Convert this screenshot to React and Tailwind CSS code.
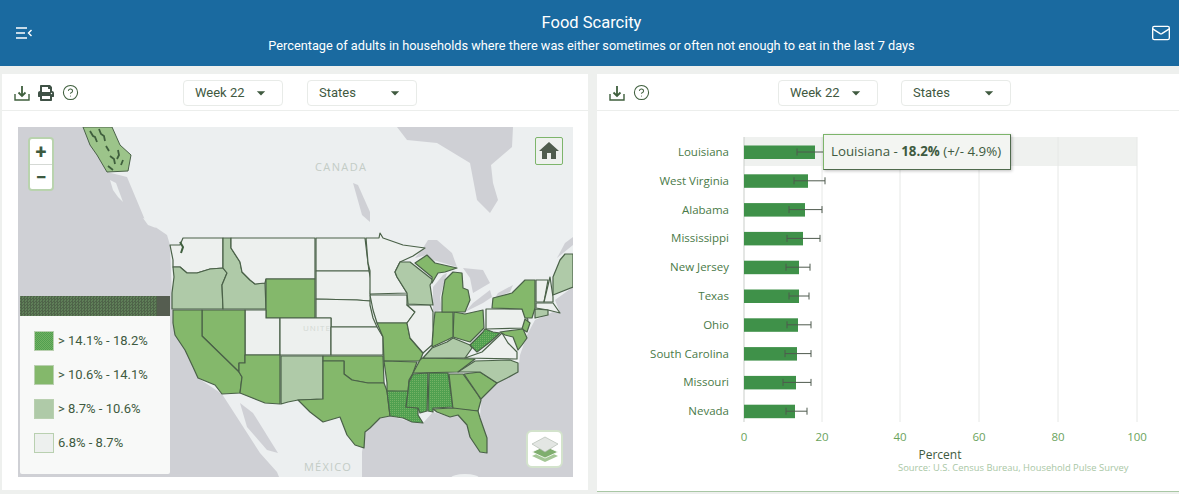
import { CircleHelp, Mail } from "lucide-react";
import { FaPrint } from "react-icons/fa";
import { MdArrowDropDown, MdHome } from "react-icons/md";

const HIGH = "url(#high-dither)";
const MID = "#84b86b";
const LOW = "#afcaa8";
const NONE = "#edf0ee";
const WATER = "#cfd0d5";

const states = [
  // name, fill, points (in screenshot coordinates)
  ["WA", NONE, "170,245 180,245 183,238 223,238 223,268 210,269 197,273 187,273 180,267 173,267 173,260"],
  ["OR", LOW, "173,267 180,267 187,273 197,273 210,269 223,268 227,273 222,285 223,309 172,309 172,293 174,277"],
  ["ID", LOW, "223,238 231,238 231,248 240,262 242,272 250,280 255,284 265,283 266,309 223,309 222,285 227,273 223,268"],
  ["MT", NONE, "231,238 315,238 315,279 266,279 265,283 255,284 250,280 242,272 240,262 231,248"],
  ["WY", MID, "266,279 315,279 315,318 266,318"],
  ["ND", NONE, "316,238 365,238 368,263 369,271 316,271"],
  ["SD", NONE, "316,271 369,271 371,280 370,301 357,300 316,299"],
  ["NE", NONE, "316,299 357,300 370,301 370,305 373,318 377,327 331,327 331,318 316,318"],
  ["UT", NONE, "245,310 266,310 266,318 280,318 280,355 245,355"],
  ["CO", NONE, "280,318 331,318 331,355 280,355"],
  ["KS", NONE, "331,327 377,327 383,337 383,355 331,355"],
  ["NV", MID, "202,310 245,310 245,363 239,363 239,372 202,336"],
  ["CA", MID, "173,310 202,310 202,336 239,372 242,377 240,393 222,394 215,385 198,378 193,367 185,350 175,335 173,323"],
  ["AZ", MID, "245,355 280,355 280,404 265,403 240,393 242,377 239,372 239,363 245,363"],
  ["NM", LOW, "281,356 323,356 323,399 298,400 288,402 281,404"],
  ["OK", MID, "323,356 383,356 384,383 368,383 352,380 344,374 344,361 323,361"],
  ["TX", MID, "323,361 344,361 344,374 352,380 368,383 384,383 387,391 390,416 380,418 370,428 365,432 364,448 355,445 347,435 340,417 323,422 310,412 298,400 323,399"],
  ["MN", NONE, "366,238 379,238 380,233 383,238 403,245 425,248 413,256 400,262 395,272 397,277 407,293 370,294 370,271 368,263"],
  ["IA", NONE, "370,295 407,295 407,305 415,312 407,323 377,323 373,310"],
  ["MO", MID, "377,323 407,323 410,338 423,353 420,361 384,361 383,337"],
  ["AR", MID, "384,361 417,362 413,373 409,380 408,392 387,391 387,383"],
  ["TN", MID, "420,360 422,358 475,359 458,372 413,373"],
  ["LA", HIGH, "387,391 408,391 406,407 418,408 418,415 423,423 412,422 403,418 390,416"],
  ["MS", HIGH, "409,382 413,374 428,373 427,411 420,413 418,408 406,407 408,392"],
  ["AL", HIGH, "429,373 448,373 453,407 433,408 433,412 428,411"],
  ["GA", MID, "449,374 463,374 478,395 481,400 478,411 453,409"],
  ["FL", MID, "433,409 453,408 478,411 480,418 487,438 487,453 480,452 470,437 467,425 458,415 450,417 437,412"],
  ["SC", MID, "464,374 480,372 497,383 481,399"],
  ["NC", LOW, "458,372 475,361 510,360 518,363 518,372 507,378 497,383 480,372"],
  ["KY", LOW, "423,358 432,348 447,342 453,338 470,345 472,348 465,358"],
  ["VA", NONE, "465,358 482,352 502,333 508,343 517,352 517,359"],
  ["WV", HIGH, "470,345 483,332 485,329 493,332 500,333 490,342 477,352"],
  ["OH", MID, "454,312 465,314 483,310 484,328 477,335 470,342 453,337"],
  ["IN", MID, "435,312 453,312 453,337 447,340 432,347 433,330"],
  ["IL", NONE, "407,305 430,305 433,312 433,330 432,345 423,353 410,338 407,323 415,312"],
  ["WI", LOW, "395,272 400,262 410,262 433,280 430,285 433,305 408,304 407,293 397,277"],
  ["MIU", MID, "415,263 427,255 435,263 457,268 445,272 438,273 432,283 432,277"],
  ["MIL", MID, "442,297 445,280 453,272 462,273 463,288 468,290 470,300 465,312 442,312"],
  ["PA", NONE, "486,309 522,309 528,320 523,328 486,329"],
  ["NY", MID, "492,308 493,298 512,293 525,280 535,280 535,308 532,318 525,318 522,309"],
  ["NJ", MID, "525,319 530,323 527,332 522,329"],
  ["MD", MID, "500,332 523,329 527,338 522,345 518,350 513,337 505,335"],
  ["VT", NONE, "536,280 548,280 544,302 536,302"],
  ["NH", NONE, "550,277 553,297 553,302 544,302"],
  ["ME", LOW, "553,277 560,260 565,254 573,254 573,287 553,295"],
  ["MA", NONE, "536,303 553,303 560,313 548,310 536,308"],
  ["CT", LOW, "535,309 548,310 548,315 535,318"],
];

const water = [
  "18,127 83,127 107,172 127,177 145,220 167,235 170,245 173,323 185,350 198,378 222,394 260,453 277,472 279,477 18,477",
  "362,477 362,452 365,432 380,418 390,416 412,422 423,423 433,412 450,417 458,415 467,425 470,437 480,452 487,453 487,438 480,418 481,400 497,383 518,372 520,355 527,335 535,320 553,312 560,313 555,300 573,287 573,477",
  "397,127 513,127 512,147 491,165 493,183 498,200 490,213 477,200 470,163 437,143 407,140",
  "415,258 423,248 428,240 437,240 452,253 457,267 440,262 433,260 427,255",
  "433,312 433,287 443,275 447,273 440,297 442,310",
  "463,268 483,270 490,283 473,293 470,278",
  "465,312 483,303 492,297 490,290 473,303",
  "495,298 510,292 513,285 498,293",
  "353,183 358,185 370,212 370,222 362,215",
  "573,237 573,245 557,258 565,243",
  "240,403 253,413 278,453 267,450 247,427",
];

const bars = [
  { name: "Louisiana", end: 816, lo: 798, hi: 835 },
  { name: "West Virginia", end: 809, lo: 795, hi: 826 },
  { name: "Alabama", end: 806, lo: 790, hi: 823 },
  { name: "Mississippi", end: 804, lo: 788, hi: 821 },
  { name: "New Jersey", end: 800, lo: 787, hi: 811 },
  { name: "Texas", end: 800, lo: 790, hi: 810 },
  { name: "Ohio", end: 799, lo: 788, hi: 812 },
  { name: "South Carolina", end: 798, lo: 786, hi: 812 },
  { name: "Missouri", end: 797, lo: 784, hi: 812 },
  { name: "Nevada", end: 796, lo: 787, hi: 808 },
];

const ticks = [
  [745, "0"],
  [823, "20"],
  [901, "40"],
  [980, "60"],
  [1059, "80"],
  [1138, "100"],
];

const legend = [
  ["bg-[repeating-conic-gradient(#50a050_0_25%,#72b062_0_50%)] bg-[length:2px_2px]", "> 14.1% - 18.2%"],
  ["bg-[#84b86b]", "> 10.6% - 14.1%"],
  ["bg-[#afcaa8]", "> 8.7% - 10.6%"],
  ["bg-[#edf0ee]", "6.8% - 8.7%"],
];

const Select = ({ label, className }) => (
  <div
    className={`flex h-[26px] items-center justify-between rounded-[4px] border border-[#e8ebe8] bg-white pl-[11px] pr-[11px] text-[13px] text-[#41593f] ${className}`}
  >
    <span>{label}</span>
    <MdArrowDropDown className="h-[20px] w-[20px] text-[#3f5a3f]" />
  </div>
);

const DownloadIcon = () => (
  <svg viewBox="0 0 16 16" className="h-[16px] w-[16px]" fill="none" stroke="#3f5f3d" strokeWidth="1.4">
    <path d="M1 9 V15 H15 V9" />
    <path d="M8 1 V11 M4.5 7.5 L8 11 L11.5 7.5" strokeWidth="1.8" />
  </svg>
);

const HelpIcon = () => (
  <CircleHelp className="h-[17px] w-[17px] text-[#3f5f3d]" strokeWidth={1.5} />
);

const MapView = () => (
  <div className="relative h-[350px] w-[555px] overflow-hidden bg-[#eceff0]">
    <svg viewBox="18 127 555 350" className="block h-full w-full">
      <defs>
        <pattern id="high-dither" width="2" height="2" patternUnits="userSpaceOnUse">
          <rect width="2" height="2" fill="#50a050" />
          <rect width="1" height="1" fill="#74b264" />
        </pattern>
      </defs>
      {water.map((points) => (
        <polygon key={points} points={points} fill={WATER} />
      ))}
      <polygon points="110,180 116,183 123,202 118,197 113,190" fill="#eceff0" />
      <polygon points="143,218 152,221 156,228 148,225" fill="#eceff0" />
      <ellipse cx="465" cy="478" rx="14" ry="4" fill="#eceff0" />
      {/* British Columbia */}
      <polygon
        points="83,127 112,127 120,145 131,155 128,171 107,172 97,155 90,145"
        fill="#9cc48a"
        stroke="#4a6148"
        strokeWidth="1"
      />
      <path d="M90 131 l3 5 2 1 2 5 M99 129 l2 5 3 2 1 5 M106 146 l3 5 M110 156 l4 3 1 5 M118 150 l1 5 -2 4 M123 160 l-2 5 M108 166 l5 4" fill="none" stroke="#3f5f3d" strokeWidth="1.8" />
      <text x="315" y="171" fontSize="11" letterSpacing="1.4" fill="#c3ccc6" fontFamily="Open Sans, sans-serif">CANADA</text>
      <text x="304" y="471" fontSize="11" letterSpacing="1.2" fill="#c3ccc6" fontFamily="Open Sans, sans-serif">MÉXICO</text>
      {states.map(([name, fill, points]) => (
        <polygon key={name} points={points} fill={fill} stroke="#4a6148" strokeWidth="1.2" strokeLinejoin="round" />
      ))}
      {/* Puget Sound */}
      <path d="M180 242 l3 5 -2 6" fill="none" stroke="#3f5f3d" strokeWidth="2" />
      <text x="303" y="331" fontSize="8" letterSpacing="1" fill="#d3d8d3" fontFamily="Open Sans, sans-serif">UNITE</text>
    </svg>

    {/* Zoom control */}
    <div className="absolute left-[10px] top-[10px] flex h-[54px] w-[26px] flex-col rounded-[4px] border-2 border-[#b9d3ae] bg-white text-[#3d5a40]">
      <div className="flex h-[26px] items-center justify-center border-b border-[#d5d9d5] text-[20px] font-bold leading-none">+</div>
      <div className="flex flex-1 items-center justify-center text-[20px] font-bold leading-none">−</div>
    </div>

    {/* Home button */}
    <div className="absolute right-[10px] top-[10px] flex h-[28px] w-[28px] items-center justify-center rounded-[2px] border border-[#7db56b] bg-[#eef1ee]">
      <MdHome className="h-[24px] w-[24px] text-[#4f5c4d]" />
    </div>

    {/* Layers button */}
    <div className="absolute bottom-[9px] right-[10px] flex h-[38px] w-[37px] items-center justify-center rounded-[6px] border-2 border-[#d3e3cc] bg-white">
      <svg viewBox="0 0 26 26" className="h-[26px] w-[26px]">
        <polygon points="13,14 26,20 13,26 0,20" fill="#a4c796" />
        <polygon points="13,10 26,16 13,22 0,16" fill="#7fae6e" stroke="#fff" strokeWidth="0.8" />
        <polygon points="13,1 26,8 13,16 0,8" fill="#e3e6e3" stroke="#aab3a9" strokeWidth="0.6" />
      </svg>
    </div>

    {/* Legend */}
    <div className="absolute bottom-[3px] left-[2px] w-[150px] rounded-b-[2px] bg-[#f8f9f8]">
      <div className="h-[20px] bg-[#555d50]">
        <div className="h-full w-[137px] bg-[repeating-conic-gradient(#4f6449_0_25%,#5f7f58_0_50%)] bg-[length:3px_3px]" />
      </div>
      <div className="flex h-[158px] flex-col gap-[14px] pl-[14px] pt-[15px]">
        {legend.map(([swatch, label]) => (
          <div key={label} className="flex h-[20px] items-center gap-[4px]">
            <span className={`h-[20px] w-[20px] border border-[#b9d0b0] ${swatch}`} />
            <span className="text-[13px] text-[#3e5a40]">{label}</span>
          </div>
        ))}
      </div>
    </div>
  </div>
);

const BarChart = () => (
  <svg viewBox="598 111 581 380" className="block h-[380px] w-[581px]" fontFamily="Open Sans, sans-serif">
    <rect x="745" y="137" width="393" height="29" fill="#eff1ef" />
    {ticks.map(([x]) => (
      <line key={x} x1={x} x2={x} y1="137" y2="422" stroke={x === 745 ? "#c9cdc9" : "#e6e8e6"} />
    ))}
    {bars.map(({ name, end, lo, hi }, i) => {
      const y = 152 + i * 28.8;
      return (
        <g key={name}>
          <text x="730" y={y + 4} textAnchor="end" fontSize="11.5" fill="#4a7a48">{name}</text>
          <rect x="745" y={y - 6.5} width={end - 745} height="13.5" fill="#3f9149" />
          <path d={`M${lo} ${y} H${hi} M${lo} ${y - 3.5} V${y + 3.5} M${hi} ${y - 3.5} V${y + 3.5}`} stroke="#4f5a4e" strokeWidth="1" fill="none" />
        </g>
      );
    })}
    {ticks.map(([x, label]) => (
      <text key={label} x={x} y="441" textAnchor="middle" fontSize="11.5" fill="#6ba35c">{label}</text>
    ))}
    <text x="941" y="459" textAnchor="middle" fontSize="12" fill="#3e5a40">Percent</text>
    <text x="899" y="471" fontSize="9.4" fill="#a9c7a5">Source: U.S. Census Bureau, Household Pulse Survey</text>
  </svg>
);

export default function App() {
  return (
    <div className="flex h-[494px] w-[1179px] flex-col overflow-hidden bg-[#eef0ee] font-['Roboto',sans-serif]">
      <header className="flex h-[66px] shrink-0 items-center justify-between bg-[#1a6aa0] pl-[16px] pr-[8px] text-white">
        <svg viewBox="0 0 16 12" className="h-[12px] w-[16px]" fill="none" stroke="currentColor" strokeWidth="1.4">
          <path d="M0 1 H11 M0 6 H9 M0 11 H11 M15.5 3 L12.5 6 L15.5 9" />
        </svg>
        <div className="text-center">
          <h1 className="text-[16.5px] leading-[20px]">Food Scarcity</h1>
          <p className="mt-[5px] text-[12.75px] leading-[16px]">
            Percentage of adults in households where there was either sometimes or often not enough to eat in the last 7 days
          </p>
        </div>
        <Mail className="h-[20px] w-[20px]" strokeWidth={1.6} />
      </header>

      <main className="flex flex-1 items-start pl-[2px] pt-[8px]">
        <section className="h-[416px] w-[586px] bg-white">
          <div className="flex h-[37px] items-center border-b border-[#eceeec] pt-[1px]">
            <div className="flex w-[181px] items-center gap-[8px] pl-[12px]">
              <DownloadIcon />
              <FaPrint className="h-[16px] w-[16px] text-[#3f5246]" />
              <HelpIcon />
            </div>
            <Select label="Week 22" className="w-[100px]" />
            <Select label="States" className="ml-[24px] w-[110px]" />
          </div>
          <div className="pl-[16px] pt-[16px]">
            <MapView />
          </div>
        </section>

        <section className="relative ml-[9px] h-[418px] w-[582px] border-b border-[#a9c7a5] bg-white">
          <div className="flex h-[37px] items-center border-b border-[#eceeec] pt-[1px]">
            <div className="flex w-[181px] items-center gap-[8px] pl-[12px]">
              <DownloadIcon />
              <HelpIcon />
            </div>
            <Select label="Week 22" className="w-[100px]" />
            <Select label="States" className="ml-[23px] w-[110px]" />
          </div>
          <BarChart />
          <div className="absolute left-[226px] top-[60px] flex h-[36px] w-[188px] items-center border border-[#7db56b] border-b-[#4f6a4c] border-r-[#4f6a4c] bg-[#f3f5f2] pl-[7px] font-['Open_Sans',sans-serif] text-[13.3px] text-[#3e5a40] shadow-[1px_1px_3px_rgba(0,0,0,0.25)]">
            <span>
              Louisiana - <b>18.2%</b> (+/- 4.9%)
            </span>
          </div>
        </section>
      </main>
    </div>
  );
}
